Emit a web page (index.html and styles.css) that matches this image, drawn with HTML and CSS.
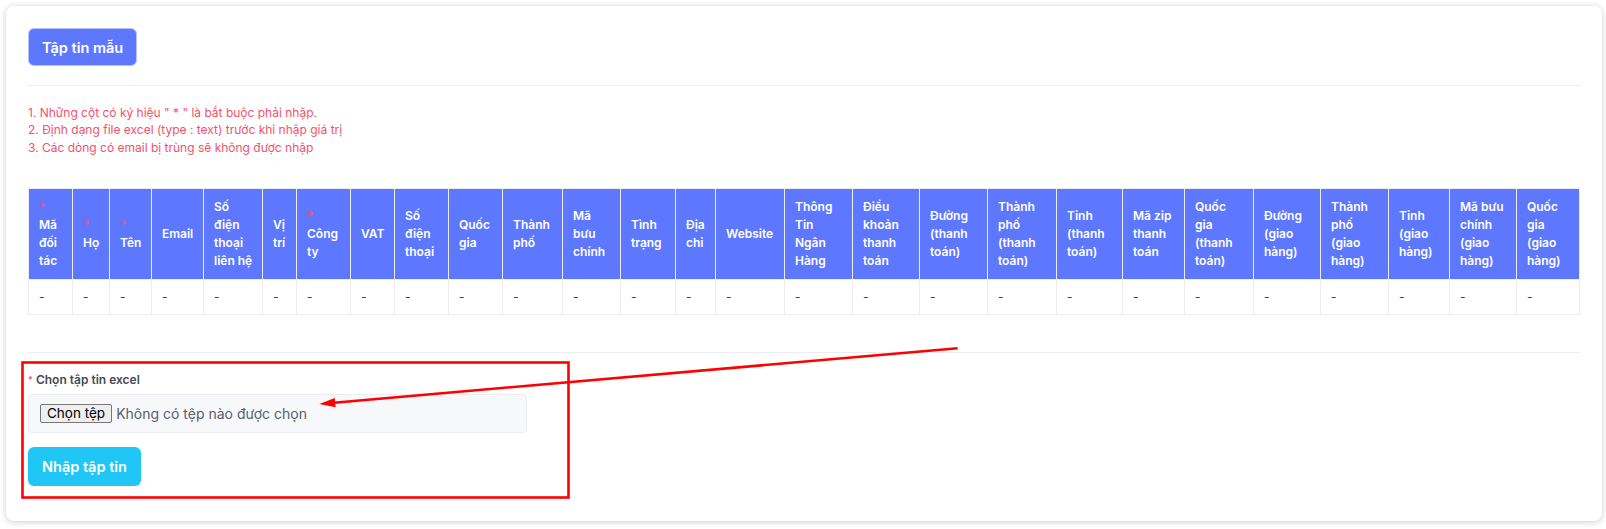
FILE: index.html
```html
<!DOCTYPE html>
<html lang="vi">
<head>
    <meta charset="UTF-8">
    <meta name="viewport" content="width=device-width, initial-scale=1.0">
    <title>Nhập đối tác từ Excel</title>
    <link rel="stylesheet" href="styles.css">
</head>
<body>
    <div class="page">
        <div class="card">
            <button class="btn btn-primary">Tập tin mẫu</button>
            <hr class="divider">

            <div class="notes">
                <div>1. Những cột có ký hiệu " * " là bắt buộc phải nhập.</div>
                <div>2. Định dạng file excel (type : text) trước khi nhập giá trị</div>
                <div>3. Các dòng có email bị trùng sẽ không được nhập</div>
            </div>

            <table class="import-table">
                <colgroup>
                    <col><col><col><col><col><col><col><col><col>
                    <col><col><col><col><col><col><col><col><col>
                    <col><col><col><col><col><col><col><col><col>
                </colgroup>
                <thead>
                    <tr>
                        <th><span class="req">*</span> Mã đối tác</th>
                        <th><span class="req">*</span> Họ</th>
                        <th><span class="req">*</span> Tên</th>
                        <th>Email</th>
                        <th>Số điện thoại liên&nbsp;hệ</th>
                        <th>Vị trí</th>
                        <th><span class="req">*</span> Công ty</th>
                        <th>VAT</th>
                        <th>Số điện thoại</th>
                        <th>Quốc gia</th>
                        <th>Thành phố</th>
                        <th>Mã bưu chính</th>
                        <th>Tình trạng</th>
                        <th>Địa chỉ</th>
                        <th>Website</th>
                        <th>Thông Tin Ngân Hàng</th>
                        <th>Điều khoản thanh toán</th>
                        <th>Đường (thanh toán)</th>
                        <th>Thành phố (thanh toán)</th>
                        <th>Tỉnh (thanh toán)</th>
                        <th>Mã&nbsp;zip thanh toán</th>
                        <th>Quốc gia (thanh toán)</th>
                        <th>Đường (giao hàng)</th>
                        <th>Thành phố (giao hàng)</th>
                        <th>Tỉnh (giao hàng)</th>
                        <th>Mã&nbsp;bưu chính (giao hàng)</th>
                        <th>Quốc gia (giao hàng)</th>
                    </tr>
                </thead>
                <tbody>
                    <tr>
                        <td>-</td><td>-</td><td>-</td><td>-</td><td>-</td><td>-</td><td>-</td><td>-</td><td>-</td>
                        <td>-</td><td>-</td><td>-</td><td>-</td><td>-</td><td>-</td><td>-</td><td>-</td><td>-</td>
                        <td>-</td><td>-</td><td>-</td><td>-</td><td>-</td><td>-</td><td>-</td><td>-</td><td>-</td>
                    </tr>
                </tbody>
            </table>

            <hr class="divider divider-form">

            <div class="import-form">
                <div class="form-label"><span class="req">*</span> Chọn tập tin excel</div>
                <label class="file-box">
                    <input type="file" class="file-input" accept=".xls,.xlsx">
                    <span class="file-btn">Chọn tệp</span>
                    <span class="file-name">Không có tệp nào được chọn</span>
                </label>
                <button class="btn btn-info">Nhập tập tin</button>
            </div>
        </div>

        <!-- red markup drawn over the screenshot -->
        <svg class="annotations" width="1606" height="529" viewBox="0 0 1606 529">
            <rect x="22.5" y="362.5" width="546" height="135" fill="none" stroke="#ff0000" stroke-width="2.6"/>
            <line x1="957.6" y1="348.2" x2="334" y2="402.7" stroke="#ff0000" stroke-width="2.6"/>
            <polygon points="319.3,404 335.6,407.3 334.8,397.9" fill="#ff0000"/>
        </svg>
    </div>
</body>
</html>
```

FILE: styles.css
```css
body {
    margin: 0;
    background-color: #FFFFFF;
    font-family: Inter, 'Noto Sans', sans-serif;
    color: #575962;
}
.page {
    position: relative;
    padding: 6px 4px 8px 6px;
}
.card {
    background-color: #FFFFFF;
    border-radius: 8px;
    box-shadow: 0 1px 6px rgba(0, 0, 0, 0.2);
    padding: 22px 22px 35px 22px;
}
.btn {
    display: inline-block;
    font-family: inherit;
    font-size: 14.5px;
    font-weight: 600;
    line-height: 21px;
    color: #FFFFFF;
    border: none;
    border-radius: 6px;
    padding: 9px 14px;
    cursor: pointer;
}
.btn-primary {
    background-color: #5d78ff;
    border: 1px solid #b9c3f7;
    padding: 7.5px 13px;
}
.btn-info {
    background-color: #1fc6f6;
}
.divider {
    border: none;
    border-top: 1px solid #ebedf2;
    margin: 19px 0 0;
}
.divider-form {
    margin-top: 37px;
}
.notes {
    margin-top: 18px;
    font-size: 12px;
    line-height: 17.4px;
    color: #f4516c;
}
.req {
    color: #f4516c;
}
.import-table {
    width: 100%;
    margin-top: 32px;
    border-collapse: collapse;
    table-layout: fixed;
    font-size: 12px;
    line-height: 18px;
}
.import-table th,
.import-table td {
    border: 1px solid #ebedf2;
    text-align: left;
    vertical-align: middle;
}
.import-table th {
    background-color: #5d78ff;
    color: #FFFFFF;
    font-weight: 600;
    padding: 9px 10px;
    overflow-wrap: normal;
}
.import-table td {
    padding: 8px 10px;
    color: #3f4047;
}
.import-table col:nth-child(1) { width: 44px; }
.import-table col:nth-child(2) { width: 37px; }
.import-table col:nth-child(3) { width: 42px; }
.import-table col:nth-child(4) { width: 52px; }
.import-table col:nth-child(5) { width: 59px; }
.import-table col:nth-child(6) { width: 34px; }
.import-table col:nth-child(7) { width: 54px; }
.import-table col:nth-child(8) { width: 44px; }
.import-table col:nth-child(9) { width: 54px; }
.import-table col:nth-child(10) { width: 54px; }
.import-table col:nth-child(11) { width: 60px; }
.import-table col:nth-child(12) { width: 58px; }
.import-table col:nth-child(13) { width: 55px; }
.import-table col:nth-child(14) { width: 40px; }
.import-table col:nth-child(15) { width: 69px; }
.import-table col:nth-child(16) { width: 68px; }
.import-table col:nth-child(17) { width: 67px; }
.import-table col:nth-child(18) { width: 68px; }
.import-table col:nth-child(19) { width: 69px; }
.import-table col:nth-child(20) { width: 66px; }
.import-table col:nth-child(21) { width: 62px; }
.import-table col:nth-child(22) { width: 69px; }
.import-table col:nth-child(23) { width: 67px; }
.import-table col:nth-child(24) { width: 68px; }
.import-table col:nth-child(25) { width: 61px; }
.import-table col:nth-child(26) { width: 67px; }
.import-table col:nth-child(27) { width: 63px; }
.import-form {
    margin-top: 18px;
}
.form-label {
    font-size: 12px;
    font-weight: 600;
    line-height: 18px;
    color: #464855;
}
.form-label .req {
    font-size: 9px;
    vertical-align: 1px;
}
.file-box {
    display: flex;
    align-items: center;
    gap: 4px;
    width: 499px;
    height: 39px;
    box-sizing: border-box;
    margin-top: 5px;
    padding: 0 11px;
    background-color: #f7f8fa;
    border: 1px solid #ebedf2;
    border-radius: 4px;
    font-size: 14px;
    cursor: pointer;
}
.file-input {
    display: none;
}
.file-btn {
    height: 19px;
    box-sizing: border-box;
    padding: 0 6px;
    font-size: 13.5px;
    line-height: 17px;
    color: #000000;
    background-color: #efefef;
    border: 1px solid #767676;
    border-radius: 2px;
}
.file-name {
    color: #595d6e;
}
.import-form .btn-info {
    margin-top: 14px;
}
.annotations {
    position: absolute;
    left: 0;
    top: 0;
    pointer-events: none;
}
```
